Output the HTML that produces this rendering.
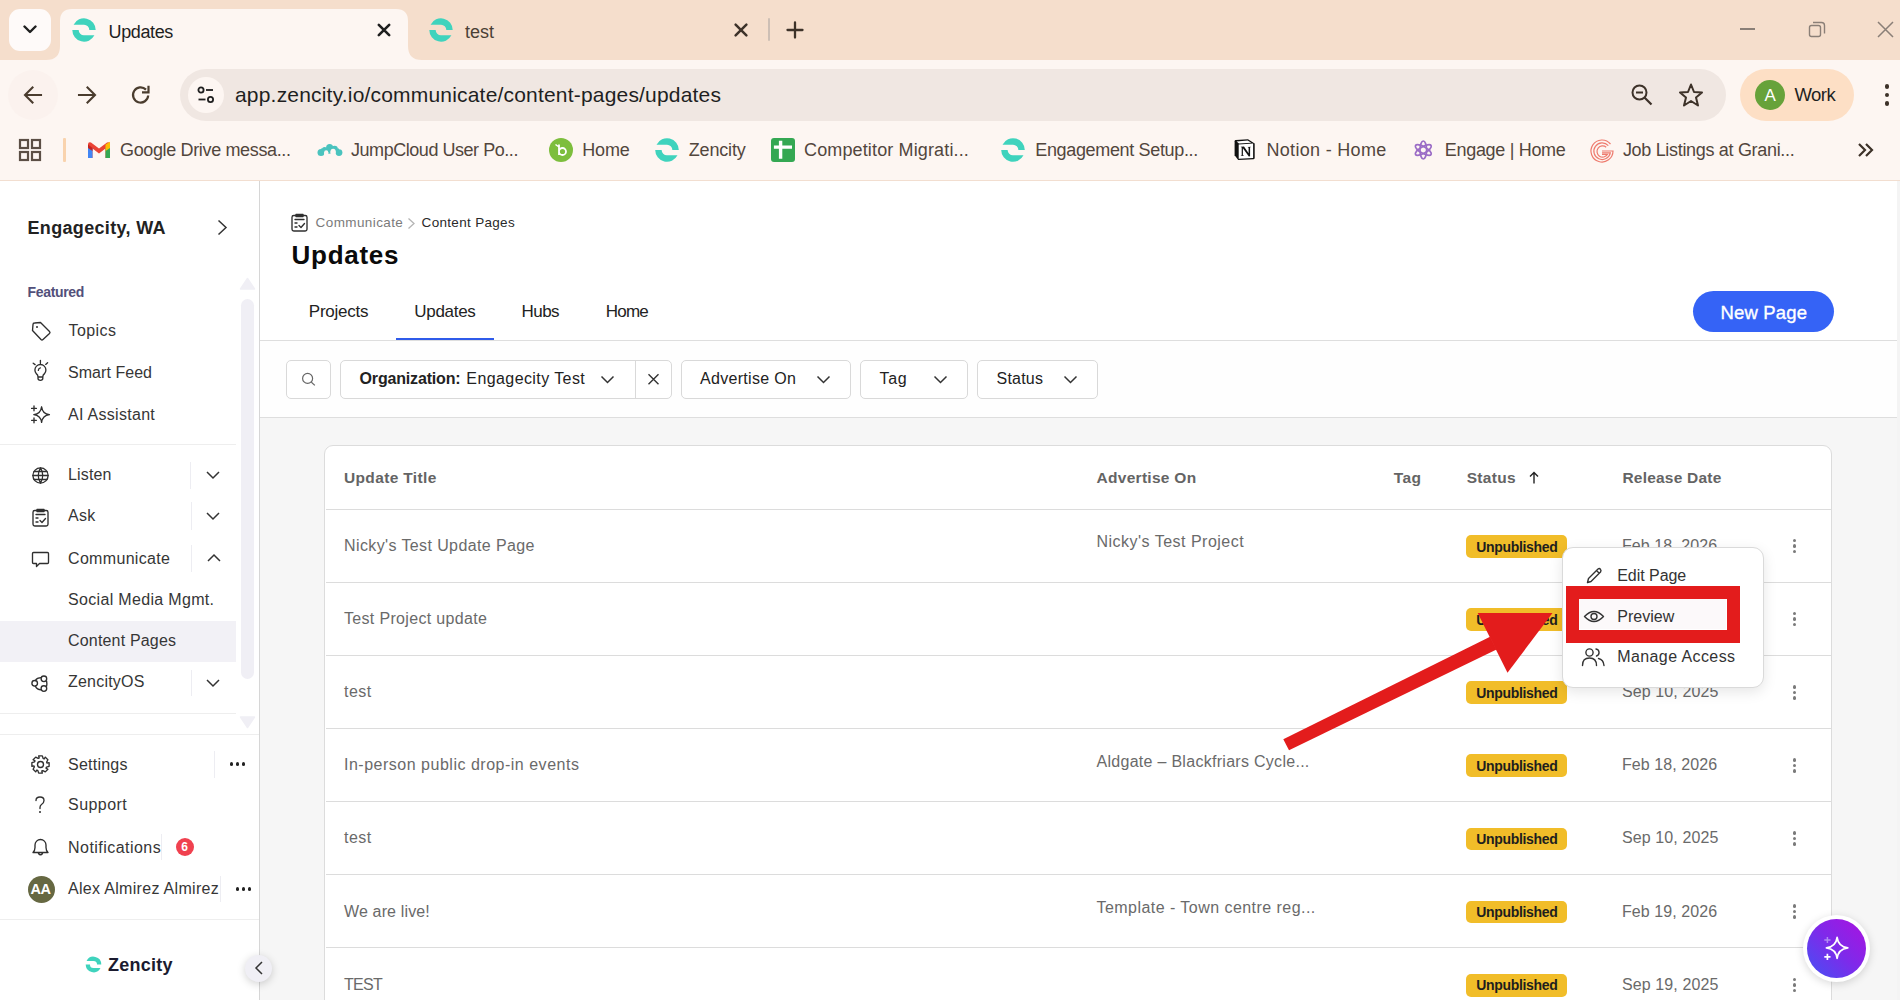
<!DOCTYPE html>
<html><head><meta charset="utf-8"><style>
html,body{margin:0;padding:0;width:1900px;height:1000px;overflow:hidden;background:#fff;}
body{position:relative;font-family:"Liberation Sans",sans-serif;}
.t{position:absolute;white-space:nowrap;line-height:1.15;}
.r{position:absolute;display:block;}
</style></head><body>
<div class="r" style="left:0px;top:0px;width:1900px;height:60px;background:#F5DECC;"></div>
<div class="r" style="left:0px;top:60px;width:1900px;height:120px;background:#FDF6F2;"></div>
<div class="r" style="left:0px;top:180px;width:1900px;height:1px;background:#F2DED0;"></div>
<div class="r" style="left:9px;top:9px;width:42px;height:42px;background:#FEFAF9;border-radius:11px;"></div>
<svg class="r" style="left:23px;top:25px;" width="14" height="9" viewBox="0 0 14 9"><path d="M1.5 1.5 L7 7 L12.5 1.5" fill="none" stroke="#1F1F1F" stroke-width="2.4" stroke-linecap="round" stroke-linejoin="round"/></svg>
<svg class="r" style="left:46px;top:9px;" width="376" height="51" viewBox="0 0 376 51"><path d="M0 51 Q14 51 14 37 L14 12 Q14 0 26 0 L350 0 Q362 0 362 12 L362 37 Q362 51 376 51 Z" fill="#FDF6F2"/></svg>
<svg class="r" style="left:70px;top:16px;" width="28" height="28" viewBox="0 0 28 28"><path d="M3.58 8.68 A11.7 11.7 0 0 1 25.70 14.00 L19.32 14.00 A5.32 5.32 0 0 0 14.00 8.68 Z" fill="#3FD3BD"/><path d="M24.42 19.32 A11.7 11.7 0 0 1 2.30 14.00 L8.68 14.00 A5.32 5.32 0 0 0 14.00 19.32 Z" fill="#3FD3BD"/></svg>
<div class="t" style="left:108.60px;top:21.81px;font-size:18px;color:#1F1F1F;letter-spacing:-0.392px;">Updates</div>
<svg class="r" style="left:376px;top:22px;" width="16" height="16" viewBox="0 0 16 16"><path d="M2.8 2.8 L13.2 13.2 M13.2 2.8 L2.8 13.2" stroke="#1F1F1F" stroke-width="2.6" stroke-linecap="round"/></svg>
<svg class="r" style="left:427px;top:16px;" width="28" height="28" viewBox="0 0 28 28"><path d="M3.58 8.68 A11.7 11.7 0 0 1 25.70 14.00 L19.32 14.00 A5.32 5.32 0 0 0 14.00 8.68 Z" fill="#3FD3BD"/><path d="M24.42 19.32 A11.7 11.7 0 0 1 2.30 14.00 L8.68 14.00 A5.32 5.32 0 0 0 14.00 19.32 Z" fill="#3FD3BD"/></svg>
<div class="t" style="left:465.00px;top:21.81px;font-size:18px;color:#4A3F36;">test</div>
<svg class="r" style="left:733px;top:22px;" width="16" height="16" viewBox="0 0 16 16"><path d="M2.6 2.6 L13.4 13.4 M13.4 2.6 L2.6 13.4" stroke="#3D3229" stroke-width="2.5" stroke-linecap="round"/></svg>
<div class="r" style="left:768px;top:18px;width:2px;height:23px;background:#CDBFB5;border-radius:1px;"></div>
<svg class="r" style="left:786px;top:21px;" width="18" height="18" viewBox="0 0 18 18"><path d="M9 1.5 V16.5 M1.5 9 H16.5" stroke="#3D3229" stroke-width="2.3" stroke-linecap="round"/></svg>
<div class="r" style="left:1740px;top:28px;width:15px;height:1.5px;background:#8A7F77;"></div>
<svg class="r" style="left:1806px;top:19px;" width="22" height="22" viewBox="0 0 22 22"><rect x="3.5" y="6.5" width="11" height="11" rx="2" fill="none" stroke="#8A7F77" stroke-width="1.4"/><path d="M7 3.5 H15.5 Q18.5 3.5 18.5 6.5 V14.5" fill="none" stroke="#8A7F77" stroke-width="1.4"/></svg>
<svg class="r" style="left:1876px;top:20px;" width="19" height="19" viewBox="0 0 19 19"><path d="M2 2 L17 17 M17 2 L2 17" stroke="#8A7F77" stroke-width="1.5"/></svg>
<div class="r" style="left:8px;top:70px;width:50px;height:50px;background:#FBF2EE;border-radius:25px;"></div>
<svg class="r" style="left:22px;top:84px;" width="22" height="22" viewBox="0 0 22 22"><path d="M19 11 H3.5 M10.5 3.5 L3 11 L10.5 18.5" fill="none" stroke="#4A3C2E" stroke-width="2.1" stroke-linecap="square"/></svg>
<svg class="r" style="left:76px;top:84px;" width="22" height="22" viewBox="0 0 22 22"><path d="M3 11 H18.5 M11.5 3.5 L19 11 L11.5 18.5" fill="none" stroke="#4A3C2E" stroke-width="2.1" stroke-linecap="square"/></svg>
<svg class="r" style="left:130px;top:84px;" width="22" height="22" viewBox="0 0 22 22"><path d="M18.2 11.5 A7.6 7.6 0 1 1 16 5.6" fill="none" stroke="#4A3C2E" stroke-width="2.2"/><path d="M18.5 1.8 V8.3 H12" fill="none" stroke="#4A3C2E" stroke-width="2.2"/></svg>
<div class="r" style="left:180px;top:69px;width:1546px;height:52px;background:#F0E7E2;border-radius:26px;"></div>
<div class="r" style="left:188px;top:77px;width:36px;height:36px;background:#FDF6F2;border-radius:18px;"></div>
<svg class="r" style="left:196px;top:85px;" width="20" height="20" viewBox="0 0 20 20"><circle cx="5" cy="5" r="2.6" fill="none" stroke="#1F1F1F" stroke-width="1.8"/><path d="M10 5 H17" stroke="#1F1F1F" stroke-width="1.8"/><circle cx="14.5" cy="14.5" r="2.6" fill="none" stroke="#1F1F1F" stroke-width="1.8"/><path d="M2.5 14.5 H9.5" stroke="#1F1F1F" stroke-width="1.8"/></svg>
<div class="t" style="left:235.00px;top:82.95px;font-size:21px;color:#1F1F1F;letter-spacing:0.190px;">app.zencity.io/communicate/content-pages/updates</div>
<svg class="r" style="left:1630px;top:83px;" width="26" height="26" viewBox="0 0 26 26"><circle cx="9.5" cy="9.5" r="7" fill="none" stroke="#3D3229" stroke-width="2"/><path d="M6 9.5 H13" stroke="#3D3229" stroke-width="2"/><path d="M14.5 14.5 L21.5 21.5" stroke="#3D3229" stroke-width="2.2"/></svg>
<svg class="r" style="left:1678px;top:82px;" width="26" height="26" viewBox="0 0 26 26"><path d="M13 2.5 L16 10 L24 10.5 L18 15.5 L20 23.5 L13 19 L6 23.5 L8 15.5 L2 10.5 L10 10 Z" fill="none" stroke="#3D3229" stroke-width="2" stroke-linejoin="round"/></svg>
<div class="r" style="left:1740px;top:69px;width:114px;height:52px;background:#FDDFC5;border-radius:26px;"></div>
<div class="r" style="left:1755px;top:80px;width:30px;height:30px;background:#67A23A;border-radius:15px;"></div>
<div class="t" style="left:1764.50px;top:85.83px;font-size:17px;color:#FFFFFF;">A</div>
<div class="t" style="left:1794.50px;top:84.05px;font-size:18.5px;color:#1F1F1F;letter-spacing:-0.558px;">Work</div>
<div class="r" style="left:1884.8px;top:84.3px;width:4.4px;height:4.4px;background:#3D3229;border-radius:50%;"></div>
<div class="r" style="left:1884.8px;top:92.5px;width:4.4px;height:4.4px;background:#3D3229;border-radius:50%;"></div>
<div class="r" style="left:1884.8px;top:101.2px;width:4.4px;height:4.4px;background:#3D3229;border-radius:50%;"></div>
<svg class="r" style="left:18px;top:138px;" width="24" height="24" viewBox="0 0 24 24"><rect x="2" y="2" width="8" height="8" fill="none" stroke="#5C4F45" stroke-width="2.2"/><rect x="2" y="14" width="8" height="8" fill="none" stroke="#5C4F45" stroke-width="2.2"/><rect x="14" y="2" width="8" height="8" fill="none" stroke="#5C4F45" stroke-width="2.2"/><rect x="14" y="14" width="8" height="8" fill="none" stroke="#5C4F45" stroke-width="2.2"/></svg>
<div class="r" style="left:63px;top:138px;width:2.5px;height:24px;background:#F9D3AE;border-radius:1px;"></div>
<svg class="r" style="left:87px;top:140px;" width="24" height="20" viewBox="0 0 24 20"><path d="M1.5 18 V4 L12 11.5 L22.5 4 V18" fill="none" stroke="#EA4335" stroke-width="0"/><path d="M1 4.5 Q1 1.5 4 2.5 L12 8.5 L20 2.5 Q23 1.5 23 4.5 V18 H18.5 V8.5 L12 13.5 L5.5 8.5 V18 H1 Z" fill="#EA4335"/><rect x="1" y="8" width="4.5" height="10" fill="#4285F4"/><rect x="18.5" y="8" width="4.5" height="10" fill="#34A853"/><path d="M18.5 4.5 L23 1.8 V8 L18.5 11 Z" fill="#FBBC04"/><path d="M1 4.5 L5.5 8 V11 L1 8 Z" fill="#C5221F"/></svg>
<div class="t" style="left:120.00px;top:139.81px;font-size:18px;color:#52463D;letter-spacing:-0.353px;">Google Drive messa...</div>
<svg class="r" style="left:312px;top:136px;" width="36" height="28" viewBox="0 0 36 28"><g fill="#4AC3BE"><circle cx="9" cy="16.6" r="3.5"/><circle cx="27" cy="16.6" r="3.4"/><circle cx="17.6" cy="11.4" r="3.5"/><circle cx="22.6" cy="12.9" r="3.2"/><circle cx="12.6" cy="13.6" r="2.6"/><rect x="9" y="12.5" width="18" height="5.2"/></g><g fill="#FDF6F2"><circle cx="14.2" cy="16.4" r="2.1"/><rect x="12.1" y="16.4" width="4.2" height="4.5"/><circle cx="21.1" cy="15.4" r="2.6"/><rect x="18.5" y="15.4" width="5.2" height="5.5"/></g></svg>
<div class="t" style="left:351.00px;top:139.81px;font-size:18px;color:#52463D;letter-spacing:-0.457px;">JumpCloud User Po...</div>
<svg class="r" style="left:549px;top:138px;" width="24" height="24" viewBox="0 0 24 24"><circle cx="12" cy="12" r="12" fill="#7DBE3D"/><path d="M10 6.5 V17 M10 13.5 A3.5 3.5 0 1 0 13.5 10 A3.5 3.5 0 0 0 10 13.5" fill="none" stroke="#fff" stroke-width="1.8"/><path d="M6.5 6.5 L10 9" stroke="#fff" stroke-width="1.5"/></svg>
<div class="t" style="left:582.30px;top:139.81px;font-size:18px;color:#52463D;letter-spacing:-0.172px;">Home</div>
<svg class="r" style="left:653px;top:136px;" width="28" height="28" viewBox="0 0 28 28"><path d="M3.49 8.63 A11.8 11.8 0 0 1 25.80 14.00 L19.37 14.00 A5.37 5.37 0 0 0 14.00 8.63 Z" fill="#3FD3BD"/><path d="M24.51 19.37 A11.8 11.8 0 0 1 2.20 14.00 L8.63 14.00 A5.37 5.37 0 0 0 14.00 19.37 Z" fill="#3FD3BD"/></svg>
<div class="t" style="left:688.70px;top:139.81px;font-size:18px;color:#52463D;letter-spacing:-0.151px;">Zencity</div>
<svg class="r" style="left:771px;top:138px;" width="24" height="24" viewBox="0 0 24 24"><rect x="0" y="0" width="24" height="24" rx="3" fill="#34A853"/><path d="M2.9 9.1 H21 M9.6 2.7 V20.8" stroke="#fff" stroke-width="3.4"/></svg>
<div class="t" style="left:804.00px;top:139.81px;font-size:18px;color:#52463D;letter-spacing:0.138px;">Competitor Migrati...</div>
<svg class="r" style="left:999px;top:136px;" width="28" height="28" viewBox="0 0 28 28"><path d="M3.49 8.63 A11.8 11.8 0 0 1 25.80 14.00 L19.37 14.00 A5.37 5.37 0 0 0 14.00 8.63 Z" fill="#3FD3BD"/><path d="M24.51 19.37 A11.8 11.8 0 0 1 2.20 14.00 L8.63 14.00 A5.37 5.37 0 0 0 14.00 19.37 Z" fill="#3FD3BD"/></svg>
<div class="t" style="left:1035.30px;top:139.81px;font-size:18px;color:#52463D;letter-spacing:-0.345px;">Engagement Setup...</div>
<svg class="r" style="left:1234px;top:139px;" width="21" height="22" viewBox="0 0 21 22"><path d="M0.6 2.2 Q0.6 1.1 1.7 1 L14 0.2 L20.7 4.6 V19 Q20.7 20.1 19.6 20.2 L4.2 21.1 L0.6 16.3 Z" fill="#111"/><path d="M4.7 5.4 L19.1 4.6 V19.1 L4.7 19.8 Z" fill="#fff"/><path d="M2.6 2.4 L13.6 1.6 L17.3 3.7 L5 4.4 Z" fill="#fff"/><path d="M6.6 7.7 L10 7.5 L14.6 14.2 V8.8 L13.6 8 L17 7.8 L16.1 8.6 V17.3 L14.8 17.5 L8.9 9.2 V16.1 L10.1 16.8 L6.6 17 L7.7 16.2 V8.5 Z" fill="#111"/></svg>
<div class="t" style="left:1266.50px;top:139.81px;font-size:18px;color:#52463D;letter-spacing:0.304px;">Notion - Home</div>
<svg class="r" style="left:1413px;top:140px;" width="21" height="21" viewBox="0 0 21 21"><g fill="none" stroke="#9B6CC6" stroke-width="1.7"><ellipse cx="10.3" cy="10" rx="3.3" ry="9"/><ellipse cx="10.3" cy="10" rx="3.3" ry="9" transform="rotate(60 10.3 10)"/><ellipse cx="10.3" cy="10" rx="3.3" ry="9" transform="rotate(120 10.3 10)"/></g></svg>
<div class="t" style="left:1444.80px;top:139.81px;font-size:18px;color:#52463D;letter-spacing:-0.312px;">Engage | Home</div>
<svg class="r" style="left:1589px;top:138px;" width="26" height="26" viewBox="0 0 26 26"><g fill="none" stroke="#EE7B6E" stroke-width="1.2"><path d="M21.5 6 A11 11 0 1 0 24 13 H13"/><path d="M19.3 7.6 A8.3 8.3 0 1 0 21.3 14.8 H13"/><path d="M17.2 9.2 A5.6 5.6 0 1 0 18.4 16.4 H13"/></g></svg>
<div class="t" style="left:1622.90px;top:139.81px;font-size:18px;color:#52463D;letter-spacing:-0.317px;">Job Listings at Grani...</div>
<svg class="r" style="left:1857px;top:142px;" width="18" height="16" viewBox="0 0 18 16"><path d="M2 2 L8 8 L2 14 M9 2 L15 8 L9 14" fill="none" stroke="#3D3229" stroke-width="2.2"/></svg>
<div class="r" style="left:0px;top:181px;width:259px;height:819px;background:#FFFFFF;"></div>
<div class="r" style="left:259px;top:181px;width:1px;height:819px;background:#D6D6D6;"></div>
<div class="r" style="left:260px;top:181px;width:1640px;height:819px;background:#F6F6F6;"></div>
<div class="r" style="left:260px;top:181px;width:1637px;height:159px;background:#FFFFFF;"></div>
<div class="r" style="left:260px;top:340px;width:1637px;height:1px;background:#DEDEDE;"></div>
<div class="r" style="left:260px;top:341px;width:1637px;height:76px;background:#FEFEFE;"></div>
<div class="r" style="left:260px;top:417px;width:1637px;height:1px;background:#DEDEDE;"></div>
<div class="r" style="left:1897px;top:181px;width:3px;height:819px;background:#F4F4F4;"></div>
<div class="t" style="left:27.50px;top:217.91px;font-size:18px;color:#222222;font-weight:700;letter-spacing:0.331px;">Engagecity, WA</div>
<svg class="r" style="left:214px;top:218px;" width="16" height="19" viewBox="0 0 16 19"><path d="M4.5 2.5 L12 9.5 L4.5 16.5" fill="none" stroke="#333" stroke-width="1.5"/></svg>
<div class="t" style="left:27.50px;top:283.50px;font-size:14px;color:#52507A;font-weight:700;letter-spacing:-0.331px;">Featured</div>
<svg class="r" style="left:239px;top:277px;" width="17" height="13" viewBox="0 0 17 13"><path d="M8.5 1.5 L15.5 12 H1.5 Z" fill="#F0EFF5" stroke="#F0EFF5" stroke-width="1.5" stroke-linejoin="round"/></svg>
<div class="r" style="left:241px;top:299px;width:13px;height:380px;background:#F0EFF5;border-radius:6.5px;"></div>
<svg class="r" style="left:239px;top:716px;" width="17" height="13" viewBox="0 0 17 13"><path d="M8.5 11.5 L15.5 1 H1.5 Z" fill="#F0EFF5" stroke="#F0EFF5" stroke-width="1.5" stroke-linejoin="round"/></svg>
<div class="r" style="left:0px;top:621px;width:236px;height:41px;background:#F2F1F6;"></div>
<div class="t" style="left:68.50px;top:321.66px;font-size:16px;color:#363636;letter-spacing:0.428px;">Topics</div>
<div class="t" style="left:68.00px;top:364.06px;font-size:16px;color:#363636;letter-spacing:0.044px;">Smart Feed</div>
<div class="t" style="left:68.00px;top:405.66px;font-size:16px;color:#363636;letter-spacing:0.291px;">AI Assistant</div>
<div class="t" style="left:68.00px;top:466.16px;font-size:16px;color:#363636;letter-spacing:0.164px;">Listen</div>
<div class="t" style="left:68.00px;top:507.36px;font-size:16px;color:#363636;letter-spacing:0.240px;">Ask</div>
<div class="t" style="left:68.00px;top:549.76px;font-size:16px;color:#363636;letter-spacing:0.328px;">Communicate</div>
<div class="t" style="left:68.00px;top:590.56px;font-size:16px;color:#363636;letter-spacing:0.325px;">Social Media Mgmt.</div>
<div class="t" style="left:68.00px;top:632.16px;font-size:16px;color:#363636;letter-spacing:0.180px;">Content Pages</div>
<div class="t" style="left:68.00px;top:673.46px;font-size:16px;color:#363636;letter-spacing:0.215px;">ZencityOS</div>
<div class="t" style="left:68.00px;top:755.66px;font-size:16px;color:#363636;letter-spacing:0.243px;">Settings</div>
<div class="t" style="left:68.00px;top:796.46px;font-size:16px;color:#363636;letter-spacing:0.460px;">Support</div>
<div class="t" style="left:68.00px;top:838.56px;font-size:16px;color:#363636;letter-spacing:0.462px;">Notifications</div>
<div class="t" style="left:68.00px;top:879.66px;font-size:16px;color:#363636;letter-spacing:0.309px;">Alex Almirez Almirez</div>
<svg class="r" style="left:30px;top:320px;" width="22" height="22" viewBox="0 0 22 22"><path d="M3 4.5 Q3 3 4.5 3 L10.5 2.5 L19.5 11.5 Q20.5 12.5 19.5 13.5 L13 19.5 Q12 20.5 11 19.5 L2.5 10.5 Z" fill="none" stroke="#2F2F2F" stroke-width="1.35" stroke-linecap="round" stroke-linejoin="round"/><circle cx="7" cy="7" r="1" fill="#2F2F2F"/></svg>
<svg class="r" style="left:30px;top:358px;" width="22" height="24" viewBox="0 0 22 24"><path d="M8 19 Q8 17 6.5 15.9 A5.5 5.5 0 1 1 14.3 15.9 Q12.8 17 12.8 19 Z M8 19 H12.8 V20.6 Q12.8 22.4 10.4 22.4 Q8 22.4 8 20.6 Z M10.4 2.3 V5.4 M3.2 5.2 L5.1 6.6 M17.6 4.7 L15.7 6.4 M8.3 12.4 Q8.6 10.2 10.4 9.9" fill="none" stroke="#2F2F2F" stroke-width="1.35" stroke-linecap="round" stroke-linejoin="round"/></svg>
<svg class="r" style="left:30px;top:404px;" width="22" height="22" viewBox="0 0 22 22"><path d="M11.6 2.8 Q12.5 9.8 19.4 10.6 Q12.5 11.4 11.6 18.4 Q10.7 11.4 3.8 10.6 Q10.7 9.8 11.6 2.8 Z M4 2 V6.8 M1.6 4.4 H6.4 M4 13.9 V18.7 M1.6 16.3 H6.4" fill="none" stroke="#2F2F2F" stroke-width="1.35" stroke-linecap="round" stroke-linejoin="round"/></svg>
<svg class="r" style="left:30px;top:465px;" width="21" height="21" viewBox="0 0 21 21"><circle cx="10.5" cy="10.5" r="7.6" fill="none" stroke="#2F2F2F" stroke-width="1.35" stroke-linecap="round" stroke-linejoin="round"/><path d="M2.9 10.5 H18.1 M4 6.5 H17 M4 14.5 H17 M10.5 2.9 Q6 10.5 10.5 18.1 Q15 10.5 10.5 2.9" fill="none" stroke="#2F2F2F" stroke-width="1.35" stroke-linecap="round" stroke-linejoin="round"/></svg>
<svg class="r" style="left:30px;top:507px;" width="21" height="21" viewBox="0 0 21 21"><rect x="3" y="3.5" width="15" height="15.5" rx="1.8" fill="none" stroke="#2F2F2F" stroke-width="1.35" stroke-linecap="round" stroke-linejoin="round"/><path d="M7 2.5 H14 V4.5 H7 Z M6 7.5 H15 M6 11 H8 M6 15 H8 M10 13.5 L12 15.5 L15.5 11.5" fill="none" stroke="#2F2F2F" stroke-width="1.35" stroke-linecap="round" stroke-linejoin="round"/></svg>
<svg class="r" style="left:30px;top:549px;" width="21" height="21" viewBox="0 0 21 21"><path d="M3.5 3.5 H17.5 Q18.5 3.5 18.5 4.5 V13.5 Q18.5 14.5 17.5 14.5 H9.5 L6.5 17.5 V14.5 H3.5 Q2.5 14.5 2.5 13.5 V4.5 Q2.5 3.5 3.5 3.5 Z" fill="none" stroke="#2F2F2F" stroke-width="1.35" stroke-linecap="round" stroke-linejoin="round"/></svg>
<svg class="r" style="left:26px;top:670px;" width="28" height="28" viewBox="0 0 28 28"><circle cx="8.7" cy="13.3" r="2.8" fill="none" stroke="#2F2F2F" stroke-width="1.35" stroke-linecap="round" stroke-linejoin="round"/><circle cx="17.9" cy="8.8" r="2.8" fill="none" stroke="#2F2F2F" stroke-width="1.35" stroke-linecap="round" stroke-linejoin="round"/><circle cx="17.9" cy="18.5" r="2.8" fill="none" stroke="#2F2F2F" stroke-width="1.35" stroke-linecap="round" stroke-linejoin="round"/><path d="M9.3 10.5 Q11 7.6 15.1 7.6 M9.3 16.1 Q11 19.6 15.1 19.8 M20.6 11.2 Q21.1 13.6 20.6 16" fill="none" stroke="#2F2F2F" stroke-width="1.35" stroke-linecap="round" stroke-linejoin="round"/></svg>
<svg class="r" style="left:30px;top:754px;" width="21" height="21" viewBox="0 0 21 21"><path d="M19.11 8.67 L19.11 12.33 L16.53 13.18 L16.00 14.14 L17.88 15.29 L15.29 17.88 L12.87 16.66 L11.82 16.97 L12.33 19.11 L8.67 19.11 L7.82 16.53 L6.86 16.00 L5.71 17.88 L3.12 15.29 L4.34 12.87 L4.03 11.82 L1.89 12.33 L1.89 8.67 L4.47 7.82 L5.00 6.86 L3.12 5.71 L5.71 3.12 L8.13 4.34 L9.18 4.03 L8.67 1.89 L12.33 1.89 L13.18 4.47 L14.14 5.00 L15.29 3.12 L17.88 5.71 L16.66 8.13 L16.97 9.18 Z" fill="none" stroke="#2F2F2F" stroke-width="1.35" stroke-linecap="round" stroke-linejoin="round"/><circle cx="10.5" cy="10.5" r="3" fill="none" stroke="#2F2F2F" stroke-width="1.35" stroke-linecap="round" stroke-linejoin="round"/></svg>
<svg class="r" style="left:32px;top:795px;" width="16" height="20" viewBox="0 0 16 20"><path d="M4 5.5 Q4 2 8 2 Q12 2 12 5.5 Q12 8 9.5 9.5 Q8 10.5 8 12.5 V13.5" fill="none" stroke="#2F2F2F" stroke-width="1.35" stroke-linecap="round" stroke-linejoin="round"/><circle cx="8" cy="17" r="1" fill="#2F2F2F"/></svg>
<svg class="r" style="left:30px;top:836px;" width="21" height="21" viewBox="0 0 21 21"><path d="M3 16.5 H18 Q16 14.5 16 11.5 V9 A5.5 5.5 0 0 0 5 9 V11.5 Q5 14.5 3 16.5 Z M8.5 17.5 Q10.5 20 12.5 17.5" fill="none" stroke="#2F2F2F" stroke-width="1.35" stroke-linecap="round" stroke-linejoin="round"/></svg>
<div class="r" style="left:190px;top:462px;width:1px;height:27px;background:#EDEDF2;"></div>
<div class="r" style="left:191px;top:502px;width:1px;height:28px;background:#EDEDF2;"></div>
<div class="r" style="left:191px;top:545px;width:1px;height:27px;background:#EDEDF2;"></div>
<div class="r" style="left:191px;top:670px;width:1px;height:26px;background:#EDEDF2;"></div>
<div class="r" style="left:214px;top:751px;width:1px;height:27px;background:#EDEDF2;"></div>
<div class="r" style="left:161px;top:834px;width:1px;height:26px;background:#EDEDF2;"></div>
<div class="r" style="left:220px;top:876px;width:1px;height:26px;background:#EDEDF2;"></div>
<svg class="r" style="left:205px;top:469.5px;" width="16" height="10" viewBox="0 0 16 10"><path d="M2 2 L8 8 L14 2" fill="none" stroke="#333" stroke-width="1.5"/></svg>
<svg class="r" style="left:205px;top:510.5px;" width="16" height="10" viewBox="0 0 16 10"><path d="M2 2 L8 8 L14 2" fill="none" stroke="#333" stroke-width="1.5"/></svg>
<svg class="r" style="left:205px;top:677.5px;" width="16" height="10" viewBox="0 0 16 10"><path d="M2 2 L8 8 L14 2" fill="none" stroke="#333" stroke-width="1.5"/></svg>
<svg class="r" style="left:206px;top:553px;" width="16" height="10" viewBox="0 0 16 10"><path d="M2 8 L8 2 L14 8" fill="none" stroke="#333" stroke-width="1.5"/></svg>
<div class="r" style="left:0px;top:444px;width:236px;height:1px;background:#EEEEEE;"></div>
<div class="r" style="left:0px;top:713px;width:236px;height:1px;background:#EEEEEE;"></div>
<div class="r" style="left:0px;top:734px;width:259px;height:1px;background:#EEEEEE;"></div>
<div class="r" style="left:0px;top:919px;width:259px;height:1px;background:#EEEEEE;"></div>
<div class="r" style="left:229.6px;top:762.4px;width:3.8px;height:3.8px;background:#222;border-radius:50%;"></div>
<div class="r" style="left:235.6px;top:762.4px;width:3.8px;height:3.8px;background:#222;border-radius:50%;"></div>
<div class="r" style="left:241.6px;top:762.4px;width:3.8px;height:3.8px;background:#222;border-radius:50%;"></div>
<div class="r" style="left:235.6px;top:887.3px;width:3.8px;height:3.8px;background:#222;border-radius:50%;"></div>
<div class="r" style="left:241.6px;top:887.3px;width:3.8px;height:3.8px;background:#222;border-radius:50%;"></div>
<div class="r" style="left:247.6px;top:887.3px;width:3.8px;height:3.8px;background:#222;border-radius:50%;"></div>
<div class="r" style="left:176px;top:838px;width:18px;height:18px;background:#F0414F;border-radius:50%;"></div>
<div class="t" style="left:181.20px;top:840.74px;font-size:12px;color:#FFFFFF;font-weight:700;">6</div>
<div class="r" style="left:27.5px;top:875.5px;width:27px;height:27px;background:#666842;border-radius:50%;"></div>
<div class="t" style="left:30.50px;top:881.34px;font-size:14.5px;color:#FFFFFF;font-weight:700;letter-spacing:-0.453px;">AA</div>
<svg class="r" style="left:84px;top:955px;" width="19" height="19" viewBox="0 0 19 19"><path d="M2.55 5.95 A7.8 7.8 0 0 1 17.30 9.50 L13.05 9.50 A3.55 3.55 0 0 0 9.50 5.95 Z" fill="#3FD3BD"/><path d="M16.45 13.05 A7.8 7.8 0 0 1 1.70 9.50 L5.95 9.50 A3.55 3.55 0 0 0 9.50 13.05 Z" fill="#3FD3BD"/></svg>
<div class="t" style="left:108.00px;top:955.11px;font-size:18px;color:#1B1B2F;font-weight:700;letter-spacing:0.233px;">Zencity</div>
<div class="r" style="left:245px;top:955px;width:27px;height:27px;background:#F0EFF5;border-radius:50%;box-shadow:0 2px 9px rgba(0,0,0,0.18);"></div>
<svg class="r" style="left:252px;top:960px;" width="14" height="16" viewBox="0 0 14 16"><path d="M10 2 L4 8 L10 14" fill="none" stroke="#333" stroke-width="1.5"/></svg>
<svg class="r" style="left:289px;top:212px;" width="21" height="21" viewBox="0 0 21 21"><rect x="3" y="3.5" width="15" height="15.5" rx="1.8" fill="none" stroke="#2F2F2F" stroke-width="1.35" stroke-linecap="round" stroke-linejoin="round"/><path d="M7 2.5 H14 V4.5 H7 Z M6 7.5 H15 M6 11 H8 M6 15 H8 M10 13.5 L12 15.5 L15.5 11.5" fill="none" stroke="#2F2F2F" stroke-width="1.35" stroke-linecap="round" stroke-linejoin="round"/></svg>
<div class="t" style="left:315.60px;top:214.76px;font-size:13.5px;color:#7B7B7B;letter-spacing:0.400px;">Communicate</div>
<svg class="r" style="left:405px;top:217px;" width="12" height="13" viewBox="0 0 12 13"><path d="M3.5 1.5 L9 6.5 L3.5 11.5" fill="none" stroke="#B5B5B5" stroke-width="1.3"/></svg>
<div class="t" style="left:421.60px;top:214.76px;font-size:13.5px;color:#2A2A2A;letter-spacing:0.316px;">Content Pages</div>
<div class="t" style="left:291.60px;top:241.14px;font-size:26px;color:#0A0A0A;font-weight:700;letter-spacing:0.705px;">Updates</div>
<div class="t" style="left:308.80px;top:302.33px;font-size:17px;color:#222222;letter-spacing:-0.259px;">Projects</div>
<div class="t" style="left:414.30px;top:302.33px;font-size:17px;color:#222222;letter-spacing:-0.304px;">Updates</div>
<div class="t" style="left:521.50px;top:302.33px;font-size:17px;color:#222222;letter-spacing:-0.532px;">Hubs</div>
<div class="t" style="left:605.70px;top:302.33px;font-size:17px;color:#222222;letter-spacing:-0.749px;">Home</div>
<div class="r" style="left:396px;top:337.5px;width:98px;height:2.5px;background:#2F5BEA;"></div>
<div class="r" style="left:1693px;top:291px;width:141px;height:41px;background:#3563F6;border-radius:21px;"></div>
<div class="t" style="left:1720.50px;top:301.65px;font-size:18.5px;color:#FFFFFF;letter-spacing:0.175px;-webkit-text-stroke:0.35px #fff;">New Page</div>
<div class="r" style="left:286px;top:359.5px;width:45px;height:39px;background:#FFFFFF;border:1px solid #D9D9D9;border-radius:5px;box-sizing:border-box;"></div>
<svg class="r" style="left:299px;top:370px;" width="19" height="19" viewBox="0 0 19 19"><circle cx="8.6" cy="8.4" r="5" fill="none" stroke="#666" stroke-width="1.2"/><path d="M12.3 12.1 L15.8 15.4" stroke="#666" stroke-width="1.3"/></svg>
<div class="r" style="left:340px;top:359.5px;width:332px;height:39px;background:#FFFFFF;border:1px solid #D9D9D9;border-radius:5px;box-sizing:border-box;"></div>
<div class="r" style="left:635px;top:360.5px;width:1px;height:37px;background:#D9D9D9;"></div>
<div class="t" style="left:359.60px;top:369.96px;font-size:16px;color:#222222;font-weight:700;letter-spacing:-0.177px;">Organization:</div>
<div class="t" style="left:466.30px;top:369.96px;font-size:16px;color:#222222;letter-spacing:0.416px;">Engagecity Test</div>
<svg class="r" style="left:599.5px;top:374.5px;" width="15" height="9" viewBox="0 0 15 9"><path d="M1.5 1.5 L7.5 7.5 L13.5 1.5" fill="none" stroke="#333" stroke-width="1.5"/></svg>
<svg class="r" style="left:646px;top:371.5px;" width="15" height="15" viewBox="0 0 15 15"><path d="M2.5 2.3 L12.5 12.3 M12.5 2.3 L2.5 12.3" stroke="#333" stroke-width="1.4"/></svg>
<div class="r" style="left:681px;top:359.5px;width:170px;height:39px;background:#FFFFFF;border:1px solid #D9D9D9;border-radius:5px;box-sizing:border-box;"></div>
<div class="t" style="left:700.10px;top:369.76px;font-size:16px;color:#222222;letter-spacing:0.293px;">Advertise On</div>
<svg class="r" style="left:815.5px;top:374.5px;" width="15" height="9" viewBox="0 0 15 9"><path d="M1.5 1.5 L7.5 7.5 L13.5 1.5" fill="none" stroke="#333" stroke-width="1.5"/></svg>
<div class="r" style="left:860px;top:359.5px;width:108px;height:39px;background:#FFFFFF;border:1px solid #D9D9D9;border-radius:5px;box-sizing:border-box;"></div>
<div class="t" style="left:879.60px;top:369.76px;font-size:16px;color:#222222;letter-spacing:0.650px;">Tag</div>
<svg class="r" style="left:932.5px;top:374.5px;" width="15" height="9" viewBox="0 0 15 9"><path d="M1.5 1.5 L7.5 7.5 L13.5 1.5" fill="none" stroke="#333" stroke-width="1.5"/></svg>
<div class="r" style="left:977px;top:359.5px;width:121px;height:39px;background:#FFFFFF;border:1px solid #D9D9D9;border-radius:5px;box-sizing:border-box;"></div>
<div class="t" style="left:996.50px;top:369.76px;font-size:16px;color:#222222;letter-spacing:0.208px;">Status</div>
<svg class="r" style="left:1062.5px;top:374.5px;" width="15" height="9" viewBox="0 0 15 9"><path d="M1.5 1.5 L7.5 7.5 L13.5 1.5" fill="none" stroke="#333" stroke-width="1.5"/></svg>
<div class="r" style="left:324px;top:445px;width:1508px;height:600px;background:#FFFFFF;border:1px solid #DCDCDC;border-radius:9px;box-sizing:border-box;"></div>
<div class="t" style="left:344.00px;top:469.12px;font-size:15.5px;color:#646464;font-weight:700;letter-spacing:0.352px;">Update Title</div>
<div class="t" style="left:1096.50px;top:469.12px;font-size:15.5px;color:#646464;font-weight:700;letter-spacing:0.292px;">Advertise On</div>
<div class="t" style="left:1393.80px;top:469.12px;font-size:15.5px;color:#646464;font-weight:700;letter-spacing:0.356px;">Tag</div>
<div class="t" style="left:1466.70px;top:469.12px;font-size:15.5px;color:#646464;font-weight:700;letter-spacing:0.309px;">Status</div>
<svg class="r" style="left:1528px;top:471px;" width="12" height="13" viewBox="0 0 12 13"><path d="M6 12.5 V1.5 M2 5.5 L6 1.5 L10 5.5" fill="none" stroke="#222" stroke-width="1.4"/></svg>
<div class="t" style="left:1622.40px;top:469.02px;font-size:15.5px;color:#646464;font-weight:700;letter-spacing:0.216px;">Release Date</div>
<div class="r" style="left:325.5px;top:509px;width:1505px;height:1px;background:#DCDCDC;"></div>
<div class="t" style="left:344.00px;top:536.96px;font-size:16px;color:#6A6A6A;letter-spacing:0.390px;">Nicky's Test Update Page</div>
<div class="t" style="left:1096.50px;top:533.46px;font-size:16px;color:#6A6A6A;letter-spacing:0.488px;">Nicky's Test Project</div>
<div class="r" style="left:1466px;top:535.0px;width:101px;height:22.8px;background:#F1BD29;border-radius:5px;"></div>
<div class="t" style="left:1476.30px;top:538.60px;font-size:14px;color:#1E1E1E;font-weight:700;letter-spacing:-0.337px;">Unpublished</div>
<div class="t" style="left:1622.00px;top:536.96px;font-size:16px;color:#6A6A6A;letter-spacing:0.080px;">Feb 18, 2026</div>
<div class="r" style="left:1792.7px;top:538.75px;width:3.5px;height:3.5px;background:#7A7A7A;border-radius:50%;"></div>
<div class="r" style="left:1792.7px;top:544.25px;width:3.5px;height:3.5px;background:#7A7A7A;border-radius:50%;"></div>
<div class="r" style="left:1792.7px;top:549.75px;width:3.5px;height:3.5px;background:#7A7A7A;border-radius:50%;"></div>
<div class="r" style="left:325.5px;top:582px;width:1505px;height:1px;background:#DCDCDC;"></div>
<div class="t" style="left:344.00px;top:610.08px;font-size:16px;color:#6A6A6A;letter-spacing:0.324px;">Test Project update</div>
<div class="r" style="left:1466px;top:608.125px;width:101px;height:22.8px;background:#F1BD29;border-radius:5px;"></div>
<div class="t" style="left:1476.30px;top:611.72px;font-size:14px;color:#1E1E1E;font-weight:700;letter-spacing:-0.337px;">Unpublished</div>
<div class="r" style="left:1792.7px;top:611.875px;width:3.5px;height:3.5px;background:#7A7A7A;border-radius:50%;"></div>
<div class="r" style="left:1792.7px;top:617.375px;width:3.5px;height:3.5px;background:#7A7A7A;border-radius:50%;"></div>
<div class="r" style="left:1792.7px;top:622.875px;width:3.5px;height:3.5px;background:#7A7A7A;border-radius:50%;"></div>
<div class="r" style="left:325.5px;top:655px;width:1505px;height:1px;background:#DCDCDC;"></div>
<div class="t" style="left:344.00px;top:683.21px;font-size:16px;color:#6A6A6A;letter-spacing:0.467px;">test</div>
<div class="r" style="left:1466px;top:681.25px;width:101px;height:22.8px;background:#F1BD29;border-radius:5px;"></div>
<div class="t" style="left:1476.30px;top:684.85px;font-size:14px;color:#1E1E1E;font-weight:700;letter-spacing:-0.337px;">Unpublished</div>
<div class="t" style="left:1622.00px;top:683.21px;font-size:16px;color:#6A6A6A;letter-spacing:0.100px;">Sep 10, 2025</div>
<div class="r" style="left:1792.7px;top:685.0px;width:3.5px;height:3.5px;background:#7A7A7A;border-radius:50%;"></div>
<div class="r" style="left:1792.7px;top:690.5px;width:3.5px;height:3.5px;background:#7A7A7A;border-radius:50%;"></div>
<div class="r" style="left:1792.7px;top:696.0px;width:3.5px;height:3.5px;background:#7A7A7A;border-radius:50%;"></div>
<div class="r" style="left:325.5px;top:728px;width:1505px;height:1px;background:#DCDCDC;"></div>
<div class="t" style="left:344.00px;top:756.33px;font-size:16px;color:#6A6A6A;letter-spacing:0.507px;">In-person public drop-in events</div>
<div class="t" style="left:1096.50px;top:752.83px;font-size:16px;color:#6A6A6A;letter-spacing:0.286px;">Aldgate – Blackfriars Cycle...</div>
<div class="r" style="left:1466px;top:754.375px;width:101px;height:22.8px;background:#F1BD29;border-radius:5px;"></div>
<div class="t" style="left:1476.30px;top:757.97px;font-size:14px;color:#1E1E1E;font-weight:700;letter-spacing:-0.337px;">Unpublished</div>
<div class="t" style="left:1622.00px;top:756.33px;font-size:16px;color:#6A6A6A;letter-spacing:0.080px;">Feb 18, 2026</div>
<div class="r" style="left:1792.7px;top:758.125px;width:3.5px;height:3.5px;background:#7A7A7A;border-radius:50%;"></div>
<div class="r" style="left:1792.7px;top:763.625px;width:3.5px;height:3.5px;background:#7A7A7A;border-radius:50%;"></div>
<div class="r" style="left:1792.7px;top:769.125px;width:3.5px;height:3.5px;background:#7A7A7A;border-radius:50%;"></div>
<div class="r" style="left:325.5px;top:801px;width:1505px;height:1px;background:#DCDCDC;"></div>
<div class="t" style="left:344.00px;top:829.46px;font-size:16px;color:#6A6A6A;letter-spacing:0.467px;">test</div>
<div class="r" style="left:1466px;top:827.5px;width:101px;height:22.8px;background:#F1BD29;border-radius:5px;"></div>
<div class="t" style="left:1476.30px;top:831.10px;font-size:14px;color:#1E1E1E;font-weight:700;letter-spacing:-0.337px;">Unpublished</div>
<div class="t" style="left:1622.00px;top:829.46px;font-size:16px;color:#6A6A6A;letter-spacing:0.100px;">Sep 10, 2025</div>
<div class="r" style="left:1792.7px;top:831.25px;width:3.5px;height:3.5px;background:#7A7A7A;border-radius:50%;"></div>
<div class="r" style="left:1792.7px;top:836.75px;width:3.5px;height:3.5px;background:#7A7A7A;border-radius:50%;"></div>
<div class="r" style="left:1792.7px;top:842.25px;width:3.5px;height:3.5px;background:#7A7A7A;border-radius:50%;"></div>
<div class="r" style="left:325.5px;top:874px;width:1505px;height:1px;background:#DCDCDC;"></div>
<div class="t" style="left:344.00px;top:902.58px;font-size:16px;color:#6A6A6A;letter-spacing:0.145px;">We are live!</div>
<div class="t" style="left:1096.50px;top:899.08px;font-size:16px;color:#6A6A6A;letter-spacing:0.456px;">Template - Town centre reg...</div>
<div class="r" style="left:1466px;top:900.625px;width:101px;height:22.8px;background:#F1BD29;border-radius:5px;"></div>
<div class="t" style="left:1476.30px;top:904.22px;font-size:14px;color:#1E1E1E;font-weight:700;letter-spacing:-0.337px;">Unpublished</div>
<div class="t" style="left:1622.00px;top:902.58px;font-size:16px;color:#6A6A6A;letter-spacing:0.080px;">Feb 19, 2026</div>
<div class="r" style="left:1792.7px;top:904.375px;width:3.5px;height:3.5px;background:#7A7A7A;border-radius:50%;"></div>
<div class="r" style="left:1792.7px;top:909.875px;width:3.5px;height:3.5px;background:#7A7A7A;border-radius:50%;"></div>
<div class="r" style="left:1792.7px;top:915.375px;width:3.5px;height:3.5px;background:#7A7A7A;border-radius:50%;"></div>
<div class="r" style="left:325.5px;top:947px;width:1505px;height:1px;background:#DCDCDC;"></div>
<div class="t" style="left:344.00px;top:975.71px;font-size:16px;color:#6A6A6A;letter-spacing:-0.693px;">TEST</div>
<div class="r" style="left:1466px;top:973.75px;width:101px;height:22.8px;background:#F1BD29;border-radius:5px;"></div>
<div class="t" style="left:1476.30px;top:977.35px;font-size:14px;color:#1E1E1E;font-weight:700;letter-spacing:-0.337px;">Unpublished</div>
<div class="t" style="left:1622.00px;top:975.71px;font-size:16px;color:#6A6A6A;letter-spacing:0.100px;">Sep 19, 2025</div>
<div class="r" style="left:1792.7px;top:977.5px;width:3.5px;height:3.5px;background:#7A7A7A;border-radius:50%;"></div>
<div class="r" style="left:1792.7px;top:983.0px;width:3.5px;height:3.5px;background:#7A7A7A;border-radius:50%;"></div>
<div class="r" style="left:1792.7px;top:988.5px;width:3.5px;height:3.5px;background:#7A7A7A;border-radius:50%;"></div>
<div class="r" style="left:1561.5px;top:546.5px;width:202.5px;height:141px;background:#FFFFFF;border:1px solid #DADADA;border-radius:11px;box-sizing:border-box;box-shadow:0 4px 14px rgba(0,0,0,0.10);"></div>
<div class="r" style="left:1579px;top:599px;width:147px;height:30px;background:#FCF9FA;"></div>
<div class="t" style="left:1617.20px;top:566.76px;font-size:16px;color:#333333;letter-spacing:-0.038px;">Edit Page</div>
<div class="t" style="left:1617.20px;top:607.76px;font-size:16px;color:#333333;letter-spacing:0.040px;">Preview</div>
<div class="t" style="left:1617.20px;top:647.76px;font-size:16px;color:#333333;letter-spacing:0.412px;">Manage Access</div>
<svg class="r" style="left:1585px;top:567px;" width="18" height="18" viewBox="0 0 18 18"><path d="M2.5 15.5 L3.5 11.5 L13 2 Q14.5 1 15.5 2.5 Q16.5 3.5 15.5 5 L6 14.5 Z M11.5 3.5 L14 6" fill="none" stroke="#333" stroke-width="1.4" stroke-linecap="round" stroke-linejoin="round"/></svg>
<svg class="r" style="left:1583px;top:608px;" width="22" height="17" viewBox="0 0 22 17"><path d="M1.5 8.5 Q11 -1.5 20.5 8.5 Q11 18.5 1.5 8.5 Z" fill="none" stroke="#333" stroke-width="1.4" stroke-linecap="round" stroke-linejoin="round"/><circle cx="11" cy="8.5" r="3" fill="none" stroke="#333" stroke-width="1.4" stroke-linecap="round" stroke-linejoin="round"/></svg>
<svg class="r" style="left:1581px;top:647px;" width="25" height="20" viewBox="0 0 25 20"><circle cx="8.5" cy="5.5" r="3.6" fill="none" stroke="#333" stroke-width="1.4" stroke-linecap="round" stroke-linejoin="round"/><path d="M1.5 18.5 Q1.5 11 8.5 11 Q15.5 11 15.5 18.5" fill="none" stroke="#333" stroke-width="1.4" stroke-linecap="round" stroke-linejoin="round"/><path d="M15 2 A3.6 3.6 0 0 1 15.5 9" fill="none" stroke="#333" stroke-width="1.4" stroke-linecap="round" stroke-linejoin="round"/><path d="M17.5 11.5 Q22.5 12.5 23 18.5" fill="none" stroke="#333" stroke-width="1.4" stroke-linecap="round" stroke-linejoin="round"/></svg>
<div class="r" style="left:1565.5px;top:586px;width:174.5px;height:57px;background:transparent;border:13.5px solid #E31C1C;box-sizing:border-box;"></div>
<svg class="r" style="left:0px;top:0px;pointer-events:none;" width="1900" height="1000" viewBox="0 0 1900 1000"><polygon points="1283.3,739.2 1289,750.3 1496.5,649.5 1490.1,636.7" fill="#E31C1C"/><polygon points="1477.7,612.9 1552.5,612.9 1507.5,672.8" fill="#E31C1C"/></svg>
<div class="r" style="left:1803px;top:914.5px;width:67px;height:67px;border-radius:50%;background:#fff;box-shadow:0 2px 8px rgba(0,0,0,0.15);"></div>
<div class="r" style="left:1807px;top:918.6px;width:59px;height:59px;border-radius:50%;background:linear-gradient(225deg,#AA12DF 0%,#7E2AEA 50%,#4452F4 100%);"></div>
<svg class="r" style="left:1818px;top:930px;" width="36" height="36" viewBox="0 0 36 36"><path d="M19.1 7.4 Q20.2 16.6 29.8 17.9 Q20.2 19.2 19.1 28.4 Q18 19.2 8.4 17.9 Q18 16.6 19.1 7.4 Z" fill="none" stroke="#fff" stroke-width="1.7" stroke-linejoin="round"/><path d="M9.4 23.8 V30 M6.3 26.9 H12.5" stroke="#fff" stroke-width="1.7"/><path d="M9.4 6.9 V13.1 M6.3 10 H12.5" stroke="#B08CF2" stroke-width="1.5"/></svg>
</body></html>
